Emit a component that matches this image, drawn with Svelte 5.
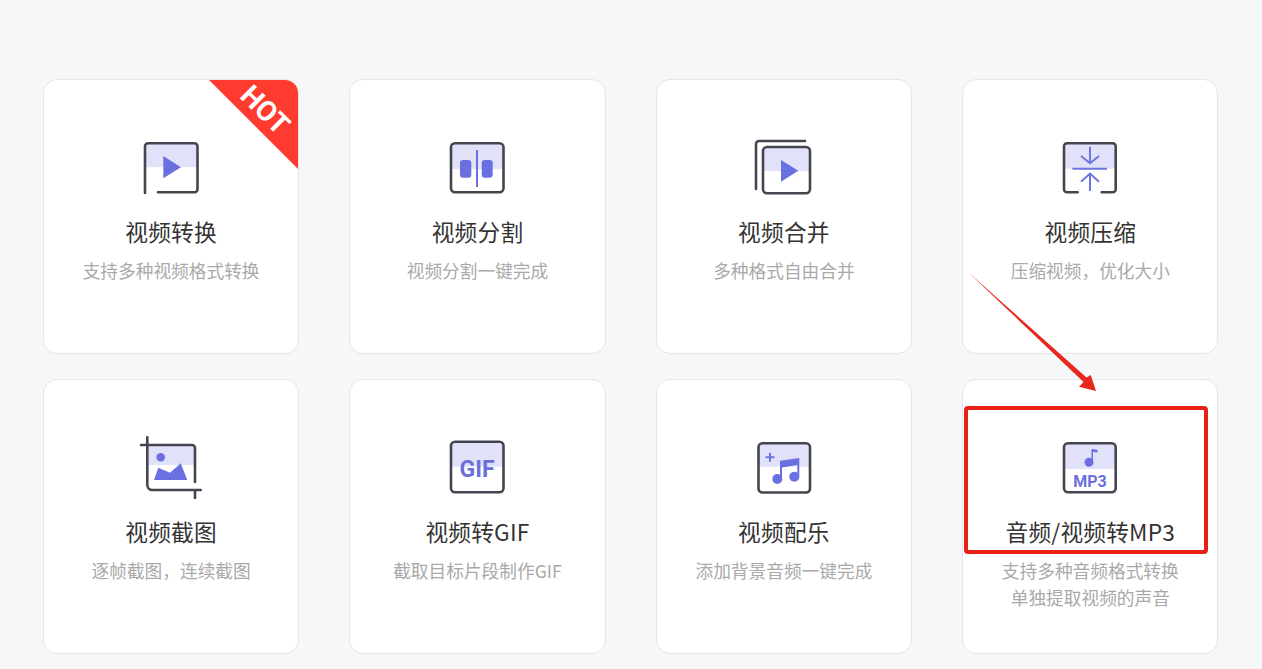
<script>
  const tools = [
    { key: 'convert', title: '视频转换', desc: ['支持多种视频格式转换'], hot: true },
    { key: 'split', title: '视频分割', desc: ['视频分割一键完成'] },
    { key: 'merge', title: '视频合并', desc: ['多种格式自由合并'] },
    { key: 'compress', title: '视频压缩', desc: ['压缩视频，优化大小'] },
    { key: 'shot', title: '视频截图', desc: ['逐帧截图，连续截图'] },
    { key: 'gif', title: '视频转GIF', desc: ['截取目标片段制作GIF'] },
    { key: 'music', title: '视频配乐', desc: ['添加背景音频一键完成'] },
    { key: 'mp3', title: '音频/视频转MP3', desc: ['支持多种音频格式转换', '单独提取视频的声音'] }
  ];
</script>

<div class="page">
  <div class="grid">
    {#each tools as t}
      <div class="card">
        {#if t.hot}
          <svg class="hot" width="91" height="91" viewBox="0 0 91 91">
            <path d="M0 0H79a12 12 0 0 1 12 12V91Z" fill="#ff3b30" />
            <text x="57" y="31" transform="rotate(45 57 31)" text-anchor="middle" dominant-baseline="central" class="hot-text">HOT</text>
          </svg>
        {/if}

        <svg class="icon" width="64" height="64" viewBox="0 0 64 64">
          {#if t.key === 'convert'}
            <rect class="tint" x="6" y="8.3" width="52.5" height="24" rx="3" />
            <path class="line" d="M6 58V11.3a3 3 0 0 1 3-3H55.5a3 3 0 0 1 3 3V54.3a3 3 0 0 1-3 3H19" />
            <path class="fill" d="M24.3 21L42 32.2L24.3 43.3Z" />
          {:else if t.key === 'split'}
            <rect class="tint" x="5" y="8.3" width="52.5" height="26" rx="3" />
            <rect class="line" x="5" y="8.3" width="52.5" height="49" rx="4" />
            <rect class="fill" x="14" y="25" width="11.3" height="17.7" rx="3" />
            <rect class="fill" x="35.7" y="25" width="11" height="17.7" rx="3" />
            <rect class="fill" x="30" y="15" width="2" height="37" />
          {:else if t.key === 'merge'}
            <rect class="tint" x="11" y="12" width="47" height="24" rx="3" />
            <rect class="line" x="11" y="12" width="47" height="46.3" rx="4" />
            <path class="line" d="M4 54V9a3 3 0 0 1 3-3H53" />
            <path class="fill" d="M29 25L46.3 35.8L29 46.7Z" />
          {:else if t.key === 'compress'}
            <rect class="tint" x="6" y="8.3" width="51.7" height="25.4" rx="3" />
            <path class="line" d="M19.7 57.3H9a3 3 0 0 1-3-3V11.3a3 3 0 0 1 3-3H54.7a3 3 0 0 1 3 3V54.3a3 3 0 0 1-3 3H43.7" />
            <path class="thin" d="M14.3 33.7H49M32 11.7V28M23 21L32 28.3L41 21M32 39V56M23 46.7L32 38.5L41 46.7" />
          {:else if t.key === 'shot'}
            <rect class="tint" x="9" y="10" width="46" height="20" />
            <path class="line" d="M2 10H53a3 3 0 0 1 3 3V47M8.3 2.3V50a5 5 0 0 0 5 5H61.7M56 55V63" />
            <circle class="fill" cx="21.7" cy="22.3" r="4.3" />
            <path class="fill" d="M15 45L19.3 32.7L31 37.7L41.7 28.3L48.3 45Z" />
          {:else if t.key === 'gif'}
            <rect class="tint" x="5" y="6.7" width="52.5" height="25" rx="3" />
            <rect class="line" x="5" y="6.7" width="52.5" height="50.6" rx="4" />
            <text class="icon-text gif" x="31" y="41.5" text-anchor="middle">GIF</text>
          {:else if t.key === 'music'}
            <rect class="tint" x="6.5" y="8.3" width="51.5" height="23.5" rx="3" />
            <rect class="line" x="6.5" y="8.3" width="51.5" height="49.2" rx="4" />
            <path class="thin" d="M13.5 22.3H22.5M18 17.8V26.8" />
            <circle class="fill" cx="25.3" cy="44" r="5" />
            <circle class="fill" cx="42.3" cy="41.7" r="5" />
            <path class="fill" d="M28 44V25.7L47.3 23V41.7H45.3V30L30 32.5V44Z" />
          {:else if t.key === 'mp3'}
            <rect class="tint" x="6" y="8.3" width="51.7" height="25.7" rx="3" />
            <rect class="line" x="6" y="8.3" width="51.7" height="49" rx="4" />
            <circle class="fill" cx="31" cy="27.3" r="4.5" />
            <path class="fill" d="M33.5 14H35V27H33.5ZM35 14L39.5 15V17.5L35 17Z" />
            <text class="icon-text mp3" x="32" y="52.3" text-anchor="middle">MP3</text>
          {/if}
        </svg>

        <div class="title">{t.title}</div>
        <div class="desc">
          {#each t.desc as line}
            <div>{line}</div>
          {/each}
        </div>
      </div>
    {/each}
  </div>

  <svg class="arrow" width="140" height="130" viewBox="0 0 140 130">
    <path d="M0 0L118.5 105.5L122.7 103L128 119L111 114.7L115.5 110Z" fill="#e8281f" />
  </svg>
  <div class="mark"></div>
</div>

<style>
  :global(body) {
    margin: 0;
    background: #f6f7f9;
  }

  .page {
    position: relative;
    box-sizing: border-box;
    height: 669px;
    padding: 79px 43.6px 15px 43px;
    overflow: hidden;
    font-family: "Noto Sans CJK SC", "Noto Sans", sans-serif;
  }

  .grid {
    display: grid;
    grid-template-columns: repeat(4, 1fr);
    grid-auto-rows: 275px;
    column-gap: 50.2px;
    row-gap: 25px;
  }

  .card {
    position: relative;
    box-sizing: border-box;
    display: flex;
    flex-direction: column;
    align-items: center;
    padding-top: 55px;
    background: #fff;
    border: 1px solid #e6e6ea;
    border-radius: 14px;
    overflow: hidden;
  }

  .hot {
    position: absolute;
    top: -1px;
    right: -1px;
  }

  .hot-text {
    fill: #fff;
    font-family: Roboto, sans-serif;
    font-weight: 700;
    font-size: 28px;
  }

  .icon {
    display: block;
    flex: none;
  }

  .tint {
    fill: #e1e2f9;
  }

  .line {
    fill: none;
    stroke: #45454f;
    stroke-width: 2.6;
    stroke-linecap: round;
  }

  .thin {
    fill: none;
    stroke: #6f75de;
    stroke-width: 2;
  }

  .fill {
    fill: #6a70e0;
  }

  .icon-text {
    fill: #6a70d8;
    font-family: Roboto, sans-serif;
    font-weight: 700;
  }

  .gif {
    font-size: 23px;
  }

  .mp3 {
    font-size: 16px;
  }

  .title {
    margin-top: 17.5px;
    font-size: 22.7px;
    line-height: 30px;
    letter-spacing: 0.2px;
    color: #333;
    white-space: nowrap;
  }

  .desc {
    margin-top: 10.5px;
    font-size: 17.7px;
    line-height: 27px;
    color: #a9a9a9;
    text-align: center;
    white-space: nowrap;
  }

  .arrow {
    position: absolute;
    left: 968px;
    top: 272px;
  }

  .mark {
    position: absolute;
    left: 964px;
    top: 406px;
    box-sizing: border-box;
    width: 244px;
    height: 148px;
    border: 4px solid #e8201a;
    border-radius: 4px;
  }
</style>
